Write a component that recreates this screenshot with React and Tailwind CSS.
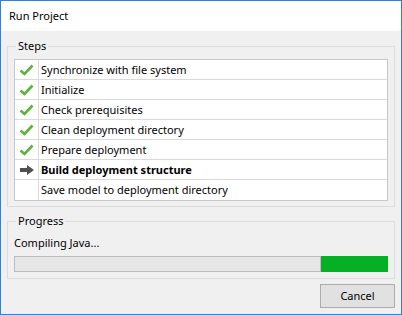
const steps = [
  { label: "Synchronize with file system", state: "done" },
  { label: "Initialize", state: "done" },
  { label: "Check prerequisites", state: "done" },
  { label: "Clean deployment directory", state: "done" },
  { label: "Prepare deployment", state: "done" },
  { label: "Build deployment structure", state: "current" },
  { label: "Save model to deployment directory", state: "pending" },
];

function CheckIcon() {
  return (
    <svg width="15" height="12" viewBox="0 0 15 12">
      <path d="M1.5 6.5 L5.5 10 L13.5 1.5" fill="none" stroke="#5db33c" strokeWidth="2.6" />
    </svg>
  );
}

function ArrowIcon() {
  return (
    <svg width="16" height="10" viewBox="0 0 16 10">
      <rect x="1" y="3" width="8" height="4" fill="#4f4f4f" />
      <polygon points="8,0 15,5 8,10" fill="#4f4f4f" />
    </svg>
  );
}

function GroupBox({ title, className, children }) {
  return (
    <div className={`relative border border-[#dcdcdc] ${className}`}>
      <span className="absolute left-[8px] top-[-9px] bg-[#f0f0f0] px-[2px] leading-[16px]">
        {title}
      </span>
      {children}
    </div>
  );
}

export default function App() {
  return (
    <div
      className="w-[402px] h-[315px] flex flex-col border border-[#2d83d4] bg-white text-[11px] text-black"
      style={{ fontFamily: '"Noto Sans", "Open Sans", sans-serif' }}
    >
      <div className="h-[30px] pl-[8px] pt-[7px] leading-[16px] bg-white">Run Project</div>

      <div className="flex-1 flex flex-col bg-[#f0f0f0] px-[6px]">
        <GroupBox title="Steps" className="mt-[15px] h-[161px] px-[6px] pt-[12px]">
          <div className="border border-[#c8c8c8] bg-white">
            {steps.map((step, i) => (
              <div
                key={step.label}
                className={`flex h-[20px] ${i < steps.length - 1 ? "border-b border-[#dadada]" : ""}`}
              >
                <div className="w-[24px] flex items-center justify-center border-r border-[#dadada]">
                  {step.state === "done" && <CheckIcon />}
                  {step.state === "current" && <ArrowIcon />}
                </div>
                <div
                  className={`flex-1 flex items-center pl-[2px] leading-[16px] ${
                    step.state === "current" ? "font-bold" : ""
                  }`}
                >
                  {step.label}
                </div>
              </div>
            ))}
          </div>
        </GroupBox>

        <GroupBox title="Progress" className="mt-[14px] h-[58px] px-[6px] pt-[13px]">
          <div className="leading-[16px]">Compiling Java...</div>
          <div className="mt-[5px] flex h-[16px]">
            <div className="flex-1 border border-[#bcbcbc] bg-[#e6e6e6]" />
            <div className="w-[67px] bg-[#06b025]" />
          </div>
        </GroupBox>

        <div className="mt-[5px] flex justify-end">
          <button className="w-[75px] h-[24px] border border-[#adadad] bg-[#e1e1e1] leading-[16px]">
            Cancel
          </button>
        </div>
      </div>
    </div>
  );
}
